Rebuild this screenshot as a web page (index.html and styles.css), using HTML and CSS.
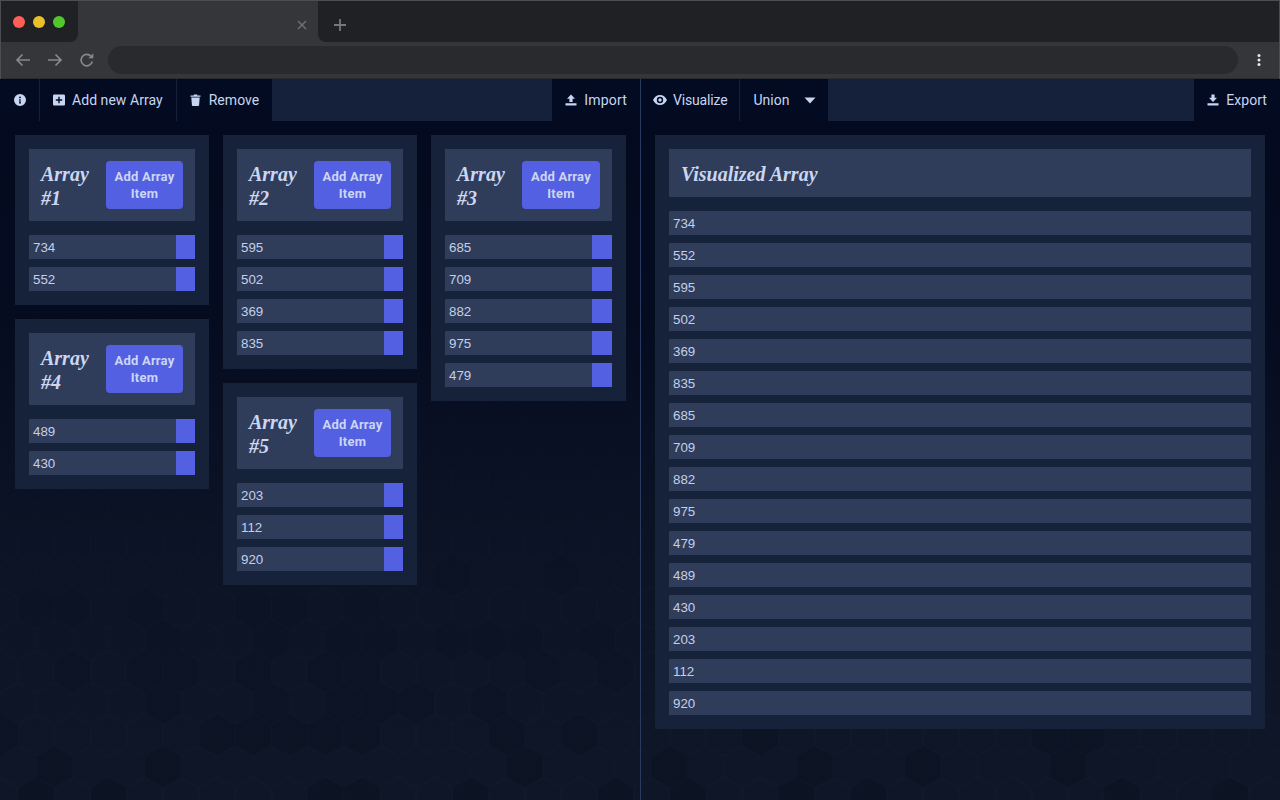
FILE: index.html
```html
<!DOCTYPE html>
<html lang="en">
<head>
<meta charset="utf-8">
<title>Array Union</title>
<link rel="stylesheet" href="styles.css">
</head>
<body>
<div class="window">
  <div class="tabstrip">
    <div class="strip-left"><span class="dot red"></span><span class="dot yellow"></span><span class="dot green"></span></div>
    <div class="tab"><svg class="tab-close" width="10" height="10" viewBox="0 0 10 10"><path d="M1 1l8 8M9 1l-8 8"/></svg></div>
    <div class="strip-right"><svg class="tab-new" width="14" height="14" viewBox="0 0 14 14"><path d="M7 1v12M1 7h12"/></svg></div>
  </div>
  <div class="toolbar">
    <svg class="tool" width="16" height="16" viewBox="0 0 16 16"><path d="M15 8H2M7.5 2.5L2 8l5.500 5.500"/></svg>
    <svg class="tool" width="16" height="16" viewBox="0 0 16 16"><path d="M1 8h13M8.500 2.500L14 8l-5.500 5.500"/></svg>
    <svg class="tool" width="16" height="16" viewBox="0 0 16 16"><path d="M13.300 9.500A5.700 5.700 0 1 1 12 4.200"/><path class="solid" d="M14.300 1.200v5h-5z"/></svg>
    <div class="address"></div>
    <svg class="menu" width="4" height="14" viewBox="0 0 4 14"><circle cx="2" cy="2.500" r="1.500"/><circle cx="2" cy="7" r="1.500"/><circle cx="2" cy="11.500" r="1.500"/></svg>
  </div>

  <div class="app">
    <svg class="hexes" viewBox="0 79 1280 721" preserveAspectRatio="none" aria-hidden="true">
      <defs>
        <linearGradient id="fade" x1="0" y1="0" x2="0" y2="1">
          <stop offset="0" stop-color="#030a1f" stop-opacity="1"/>
          <stop offset="0.35" stop-color="#040b20" stop-opacity="0.9"/>
          <stop offset="1" stop-color="#0e1526" stop-opacity="0"/>
        </linearGradient>
        <polygon id="hx" points="0,-21 18.100,-10.700 18.100,10.700 0,21 -18.100,10.700 -18.100,-10.700"/>
        <pattern id="grid" patternUnits="userSpaceOnUse" width="36.200" height="63.400" x="0" y="0">
          <use href="#hx" x="18.100" y="6" class="hex-line"/>
          <use href="#hx" x="18.100" y="69.400" class="hex-line"/>
          <use href="#hx" x="0" y="37.700" class="hex-line"/>
          <use href="#hx" x="36.200" y="37.700" class="hex-line"/>
        </pattern>
      </defs>
      <rect x="0" y="79" width="1280" height="721" class="hex-base"/>
      <rect x="0" y="79" width="1280" height="721" fill="url(#grid)"/>
      <g class="hex-dark">
        <use href="#hx" x="452.500" y="576"/><use href="#hx" x="561" y="576"/>
        <use href="#hx" x="36.200" y="608"/><use href="#hx" x="72.400" y="608"/><use href="#hx" x="144.800" y="608"/><use href="#hx" x="253.400" y="608"/><use href="#hx" x="289.600" y="608"/><use href="#hx" x="362" y="608"/>
        <use href="#hx" x="163" y="640"/><use href="#hx" x="271.500" y="640"/><use href="#hx" x="343.900" y="640"/><use href="#hx" x="380.100" y="640"/><use href="#hx" x="452.500" y="640"/><use href="#hx" x="488.700" y="640"/><use href="#hx" x="524.900" y="640"/><use href="#hx" x="597.300" y="640"/>
        <use href="#hx" x="72.400" y="671.700"/><use href="#hx" x="144.800" y="671.700"/><use href="#hx" x="181" y="671.700"/><use href="#hx" x="253.400" y="671.700"/><use href="#hx" x="325.800" y="671.700"/><use href="#hx" x="362" y="671.700"/><use href="#hx" x="543" y="671.700"/><use href="#hx" x="615.400" y="671.700"/>
        <use href="#hx" x="163" y="703.400"/><use href="#hx" x="271.500" y="703.400"/><use href="#hx" x="343.900" y="703.400"/><use href="#hx" x="380.100" y="703.400"/><use href="#hx" x="416.300" y="703.400"/><use href="#hx" x="488.700" y="703.400"/>
        <use href="#hx" x="0" y="735"/><use href="#hx" x="217.200" y="735"/><use href="#hx" x="253.400" y="735"/><use href="#hx" x="289.600" y="735"/><use href="#hx" x="325.800" y="735"/><use href="#hx" x="362" y="735"/><use href="#hx" x="506.800" y="735"/><use href="#hx" x="579.200" y="735"/><use href="#hx" x="760.200" y="735"/><use href="#hx" x="1086" y="735"/><use href="#hx" x="1049.800" y="735"/>
        <use href="#hx" x="54.300" y="766.800"/><use href="#hx" x="163" y="766.800"/><use href="#hx" x="524.900" y="766.800"/><use href="#hx" x="669.700" y="766.800"/><use href="#hx" x="814.500" y="766.800"/><use href="#hx" x="923.100" y="766.800"/><use href="#hx" x="1067.900" y="766.800"/>
        <use href="#hx" x="36.200" y="798"/><use href="#hx" x="108.600" y="798"/><use href="#hx" x="325.800" y="798"/><use href="#hx" x="362" y="798"/><use href="#hx" x="470.600" y="798"/><use href="#hx" x="615.400" y="798"/><use href="#hx" x="688" y="798"/><use href="#hx" x="796" y="798"/><use href="#hx" x="868.800" y="798"/><use href="#hx" x="1122" y="798"/><use href="#hx" x="1230" y="798"/>
      </g>
      <rect x="0" y="79" width="1280" height="721" fill="url(#fade)"/>
    </svg>

    <section class="pane pane-left">
      <nav class="nav">
        <div class="nav-item sep">
          <svg class="ico" width="12" height="12" viewBox="0 0 12 12"><path fill-rule="evenodd" d="M6 0a6 6 0 1 1 0 12A6 6 0 0 1 6 0zM6 2.500a.9.9 0 1 0 0 1.800.9.9 0 0 0 0-1.800zM5 5.200v.9h.4v2.500H5v.9h2v-.9h-.4V5.200z"/></svg>
        </div>
        <div class="nav-item sep">
          <svg class="ico" width="12" height="12" viewBox="0 0 12 12"><path fill-rule="evenodd" d="M1.300.500h9.400c.7 0 1.300.6 1.300 1.300v8.400c0 .7-.6 1.300-1.300 1.300H1.300C.6 11.500 0 10.900 0 10.200V1.800C0 1.100.6.500 1.300.500zM5.300 2.800v2.500H2.800v1.400h2.500v2.500h1.400V6.700h2.500V5.300H6.700V2.800z"/></svg>
          <span>Add new Array</span>
        </div>
        <div class="nav-item remove">
          <svg class="ico" width="11" height="12" viewBox="0 0 11 12"><path d="M.5 1.500h3l.5-1h3l.5 1h3v1.300H.5zM1.300 3.500h8.400l-.6 7.600c0 .5-.4.900-.9.900H2.800c-.5 0-.9-.4-.9-.9z"/></svg>
          <span>Remove</span>
        </div>
        <div class="nav-fill"></div>
        <div class="nav-item import">
          <svg class="ico" width="12" height="12" viewBox="0 0 12 12"><path d="M6 .5l4 4.200H7.600v3.300H4.400V4.700H2zM.5 9.300h11V11.500H.5z"/></svg>
          <span>Import</span>
        </div>
      </nav>
      <div class="board board-cols">
        <div class="col">
          <article class="card">
            <header class="card-head"><h2 class="title">Array #1</h2><button class="add">Add Array Item</button></header>
            <div class="row"><div class="val">734</div><div class="del"></div></div>
            <div class="row"><div class="val">552</div><div class="del"></div></div>
          </article>
          <article class="card">
            <header class="card-head"><h2 class="title">Array #4</h2><button class="add">Add Array Item</button></header>
            <div class="row"><div class="val">489</div><div class="del"></div></div>
            <div class="row"><div class="val">430</div><div class="del"></div></div>
          </article>
        </div>
        <div class="col">
          <article class="card">
            <header class="card-head"><h2 class="title">Array #2</h2><button class="add">Add Array Item</button></header>
            <div class="row"><div class="val">595</div><div class="del"></div></div>
            <div class="row"><div class="val">502</div><div class="del"></div></div>
            <div class="row"><div class="val">369</div><div class="del"></div></div>
            <div class="row"><div class="val">835</div><div class="del"></div></div>
          </article>
          <article class="card">
            <header class="card-head"><h2 class="title">Array #5</h2><button class="add">Add Array Item</button></header>
            <div class="row"><div class="val">203</div><div class="del"></div></div>
            <div class="row"><div class="val">112</div><div class="del"></div></div>
            <div class="row"><div class="val">920</div><div class="del"></div></div>
          </article>
        </div>
        <div class="col col-wide">
          <article class="card">
            <header class="card-head"><h2 class="title">Array #3</h2><button class="add">Add Array Item</button></header>
            <div class="row"><div class="val">685</div><div class="del"></div></div>
            <div class="row"><div class="val">709</div><div class="del"></div></div>
            <div class="row"><div class="val">882</div><div class="del"></div></div>
            <div class="row"><div class="val">975</div><div class="del"></div></div>
            <div class="row"><div class="val">479</div><div class="del"></div></div>
          </article>
        </div>
      </div>
    </section>

    <section class="pane pane-right">
      <nav class="nav">
        <div class="nav-item sep visualize">
          <svg class="ico" width="14" height="10" viewBox="0 0 14 10"><path fill-rule="evenodd" d="M7 0c3 0 5.600 1.900 7 5-1.400 3.100-4 5-7 5S1.400 8.100 0 5c1.400-3.100 4-5 7-5zm0 1.800a3.200 3.200 0 1 0 0 6.400 3.200 3.200 0 0 0 0-6.400zM7 3.300a1.700 1.700 0 1 1 0 3.400 1.700 1.700 0 0 1 0-3.400z"/></svg>
          <span>Visualize</span>
        </div>
        <div class="nav-item union">
          <span>Union</span>
          <svg class="ico" width="12" height="7" viewBox="0 0 12 7"><path d="M.5.500h11L6 6.500z"/></svg>
        </div>
        <div class="nav-fill"></div>
        <div class="nav-item export">
          <svg class="ico" width="12" height="12" viewBox="0 0 12 12"><path d="M4.400.5h3.200v3.300H10L6 8 2 3.800h2.400zM.5 9.300h11V11.500H.5z"/></svg>
          <span>Export</span>
        </div>
      </nav>
      <div class="board">
        <article class="card card-wide">
          <header class="card-head head-wide"><h2 class="title">Visualized Array</h2></header>
          <div class="row"><div class="val">734</div></div>
          <div class="row"><div class="val">552</div></div>
          <div class="row"><div class="val">595</div></div>
          <div class="row"><div class="val">502</div></div>
          <div class="row"><div class="val">369</div></div>
          <div class="row"><div class="val">835</div></div>
          <div class="row"><div class="val">685</div></div>
          <div class="row"><div class="val">709</div></div>
          <div class="row"><div class="val">882</div></div>
          <div class="row"><div class="val">975</div></div>
          <div class="row"><div class="val">479</div></div>
          <div class="row"><div class="val">489</div></div>
          <div class="row"><div class="val">430</div></div>
          <div class="row"><div class="val">203</div></div>
          <div class="row"><div class="val">112</div></div>
          <div class="row"><div class="val">920</div></div>
        </article>
      </div>
    </section>
  </div>
</div>
</body>
</html>
```
FILE: styles.css
```css
* { box-sizing: border-box; }
html, body { margin: 0; padding: 0; height: 100%; overflow: hidden; background: #040b20; }

.window {
  width: 1280px;
  height: 800px;
  display: flex;
  flex-direction: column;
  border: 1px solid #4c4d4f;
  border-bottom: 0;
}

/* browser chrome */
.tabstrip { height: 41px; flex: none; display: flex; background: #35363a; }
.strip-left {
  width: 77px;
  background: #202124;
  border-bottom-right-radius: 8px;
  display: flex;
  gap: 8px;
  padding: 15px 0 0 12px;
}
.dot { width: 12px; height: 12px; border-radius: 50%; }
.red { background: #ff5f57; }
.yellow { background: #e9c02b; }
.green { background: #52c72b; }
.tab {
  width: 240px;
  margin-top: 7px;
  background: #35363a;
  border-radius: 8px 8px 0 0;
  display: flex;
  justify-content: flex-end;
  align-items: center;
  padding: 0 11px 1px 0;
}
.tab-close path { stroke: #707276; stroke-width: 1.400; fill: none; }
.strip-right {
  flex: 1;
  background: #202124;
  border-bottom-left-radius: 8px;
  padding: 17px 0 0 15px;
}
.tab-new { display: block; }
.tab-new path { stroke: #75777b; stroke-width: 1.800; fill: none; }

.toolbar {
  height: 37px;
  flex: none;
  background: #35363a;
  border-bottom: 1px solid #2a2b2d;
  display: flex;
  align-items: center;
  padding: 0 0 0 14px;
  gap: 16px;
}
.tool { flex: none; }
.tool path { stroke: #86888c; stroke-width: 1.700; fill: none; }
.tool path.solid { stroke: none; fill: #86888c; }
.address {
  width: 1130px;
  height: 28px;
  margin-left: -3px;
  border-radius: 14px;
  background: #292a2d;
}
.menu { flex: none; margin-left: 3px; }
.menu circle { fill: #e8eaed; }

/* app */
.app {
  flex: 1;
  min-height: 0;
  position: relative;
  display: flex;
}
.hexes { position: absolute; left: -1px; top: 0; width: 1280px; height: 721px; }
.hex-base { fill: #0f1627; }
.hex-line { fill: none; stroke: #111929; stroke-width: 1; }
.hex-dark use { fill: #0c1424; stroke: #111929; stroke-width: 1; }

.pane { position: relative; display: flex; flex-direction: column; min-width: 0; }
.pane-left { width: 640px; border-right: 1px solid #2a3a5f; }
.pane-right { width: 638px; }

.nav { height: 42px; flex: none; display: flex; background: #15203a; }
.nav-fill { flex: 1; }
.nav-item {
  display: flex;
  align-items: center;
  gap: 7px;
  padding: 0 13px;
  background: #020b21;
  color: #c8d5f2;
  font: 400 14px/20px Roboto, "Liberation Sans", sans-serif;
  letter-spacing: 0.05px;
  white-space: nowrap;
}
.nav-item.sep { border-right: 1px solid #152038; }
.nav-item.remove { gap: 8px; }
.nav-item.import { letter-spacing: 0.2px; }
.nav-item.visualize { gap: 6px; padding: 0 12px; letter-spacing: -0.17px; }
.nav-item.union { gap: 14px; padding: 0 12px 0 13px; }
.nav-item.export { padding: 0 12px 0 13px; }
.ico { flex: none; fill: #c8d5f2; }

.board { flex: 1; display: flex; gap: 14px; padding: 14px; align-items: flex-start; }
.board-cols { display: grid; grid-template-columns: 194px 194px 195px; }
.col { min-width: 0; display: flex; flex-direction: column; gap: 14px; }
.card {
  background: #16213a;
  padding: 14px;
  display: flex;
  flex-direction: column;
  gap: 8px;
}
.card-wide { flex: 1; }
.card-head {
  height: 72px;
  background: #303d5a;
  padding: 12px;
  display: flex;
  justify-content: space-between;
  gap: 4px;
  margin-bottom: 6px;
}
.head-wide { height: 48px; }
.title {
  margin: 1px 0 0;
  color: #cbd6f2;
  font: italic 700 20px/24px "Liberation Serif", serif;
}
.add {
  flex: none;
  width: 77px;
  height: 48px;
  padding: 0 6px;
  border: 0;
  border-radius: 4px;
  background: #5360e2;
  color: #cbd6f2;
  font: 700 13px/17px Roboto, "Liberation Sans", sans-serif;
  letter-spacing: 0.2px;
  text-align: center;
}
.col-wide .add { width: 78px; }
.row { display: flex; height: 24px; }
.val {
  flex: 1;
  background: #303d5a;
  color: #c3cfeb;
  padding-left: 4px;
  font: 400 13.333px/25px "Liberation Sans", sans-serif;
}
.del { width: 19px; flex: none; background: #5360e2; }
.col-wide .del { width: 20px; }
```
